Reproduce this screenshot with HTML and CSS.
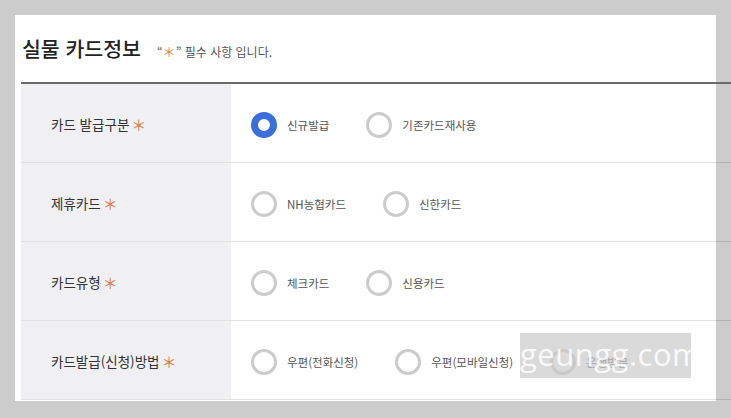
FILE: index.html
```html
<!DOCTYPE html>
<html lang="ko">
<head>
<meta charset="utf-8">
<title>실물 카드정보</title>
<link rel="stylesheet" href="styles.css">
</head>
<body>
<div class="panel">
  <div class="head">
    <h2 class="title">실물 카드정보</h2>
    <span class="note">“<span class="req">＊</span>” 필수 사항 입니다.</span>
  </div>
  <div class="table">
    <div class="row">
      <div class="label">카드 발급구분 <span class="req">＊</span></div>
      <div class="value">
        <span class="opt"><span class="radio on"></span>신규발급</span>
        <span class="opt"><span class="radio"></span>기존카드재사용</span>
      </div>
    </div>
    <div class="row">
      <div class="label">제휴카드 <span class="req">＊</span></div>
      <div class="value">
        <span class="opt"><span class="radio"></span>NH농협카드</span>
        <span class="opt"><span class="radio"></span>신한카드</span>
      </div>
    </div>
    <div class="row">
      <div class="label">카드유형 <span class="req">＊</span></div>
      <div class="value">
        <span class="opt"><span class="radio"></span>체크카드</span>
        <span class="opt"><span class="radio"></span>신용카드</span>
      </div>
    </div>
    <div class="row">
      <div class="label">카드발급(신청)방법 <span class="req">＊</span></div>
      <div class="value">
        <span class="opt"><span class="radio"></span>우편(전화신청)</span>
        <span class="opt"><span class="radio"></span>우편(모바일신청)</span>
        <span class="opt"><span class="radio"></span>은행방문</span>
      </div>
    </div>
  </div>
</div>
<div class="watermark">geungg.com</div>
</body>
</html>
```
FILE: styles.css
```css
html, body {
  margin: 0;
  padding: 0;
}
body {
  background: #cccccc;
  width: 731px;
  height: 418px;
  overflow: hidden;
  position: relative;
  font-family: "Noto Sans CJK KR", "Noto Sans", sans-serif;
}
.panel {
  margin: 15px 0 0 15px;
  width: 701px;
  height: 386px;
  background: #ffffff;
  padding-left: 6px;
  box-sizing: border-box;
}
.head {
  height: 67px;
  display: flex;
  align-items: baseline;
  padding-top: 19px;
  box-sizing: border-box;
}
.title {
  margin: 0 0 0 1px;
  font-size: 20.5px;
  font-weight: 500;
  color: #222222;
  line-height: 28px;
}
.note {
  margin-left: 16px;
  font-size: 12px;
  color: #555555;
}
.req {
  color: #d9804a;
  font-weight: 400;
  line-height: 1;
}
.note .req {
  font-size: 13px;
}
.table {
  width: 760px;
  border-top: 2px solid #6b6b6b;
}
.row {
  display: flex;
  height: 79px;
  border-bottom: 1px solid rgba(0, 0, 0, 0.12);
  box-sizing: border-box;
}
.label {
  width: 210px;
  background: #f0f0f2;
  padding: 2px 0 0 30px;
  box-sizing: border-box;
  display: flex;
  align-items: center;
  gap: 2px;
  font-size: 13.5px;
  color: #333333;
}
.label .req {
  font-size: 15px;
}
.value {
  flex: 1;
  display: flex;
  align-items: center;
  gap: 37px;
  padding: 4px 0 0 20px;
  font-size: 11.5px;
  color: #555555;
}
.opt {
  display: flex;
  align-items: center;
  gap: 10px;
}
.radio {
  width: 26px;
  height: 26px;
  border: 3px solid #cccccc;
  border-radius: 50%;
  box-sizing: border-box;
  background: #ffffff;
}
.radio.on {
  border: 7px solid #3b6fd9;
}
.watermark {
  position: absolute;
  left: 520px;
  top: 333px;
  width: 171px;
  height: 45px;
  background: rgba(200, 200, 200, 0.68);
  color: rgba(255, 255, 255, 0.85);
  font-family: "Open Sans", "Liberation Sans", sans-serif;
  font-size: 31px;
  line-height: 42px;
  text-align: center;
  letter-spacing: 0.5px;
}
```
